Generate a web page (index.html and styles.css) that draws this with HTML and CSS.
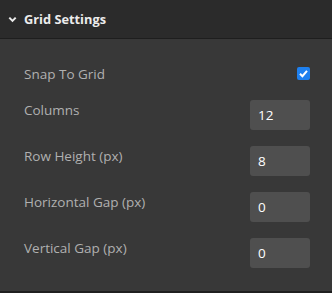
FILE: index.html
```html
<!DOCTYPE html>
<html>
<head>
<meta charset="utf-8">
<link rel="stylesheet" href="styles.css">
</head>
<body>
<div class="panel">
  <div class="panel-header">
    <svg class="chevron" width="9" height="7" viewBox="0 0 9 7"><path d="M1.3 1.6 L4.5 4.9 L7.7 1.6" fill="none" stroke="#ececec" stroke-width="2"/></svg>
    <span class="panel-title">Grid Settings</span>
  </div>
  <div class="panel-body">
    <div class="row row-check">
      <span class="label">Snap To Grid</span>
      <span class="checkbox">
        <svg width="13" height="13" viewBox="0 0 13 13"><path d="M3 6.8 L5.4 9.2 L10 3.8" fill="none" stroke="#fff" stroke-width="2"/></svg>
      </span>
    </div>
    <div class="row">
      <span class="label">Columns</span>
      <div class="input">12</div>
    </div>
    <div class="row">
      <span class="label">Row Height (px)</span>
      <div class="input">8</div>
    </div>
    <div class="row">
      <span class="label">Horizontal Gap (px)</span>
      <div class="input">0</div>
    </div>
    <div class="row">
      <span class="label">Vertical Gap (px)</span>
      <div class="input">0</div>
    </div>
  </div>
</div>
</body>
</html>
```
FILE: styles.css
```css
html, body {
  margin: 0;
  padding: 0;
  background: #383838;
}
.panel {
  width: 332px;
  height: 293px;
  box-sizing: border-box;
  font-family: "Open Sans", "Noto Sans", sans-serif;
  background: #383838;
  border-bottom: 2px solid #1f1f1f;
}
.panel-header {
  height: 38px;
  background: #2b2b2b;
  border-bottom: 1px solid #1e1e1e;
  display: flex;
  align-items: center;
  padding-left: 8px;
}
.chevron {
  display: block;
  margin-right: 7px;
}
.panel-title {
  color: #ececec;
  font-size: 12.8px;
  font-weight: 700;
}
.panel-body {
  padding: 24px 22px 0 24px;
  display: flex;
  flex-direction: column;
  gap: 16px;
}
.row {
  display: flex;
  justify-content: space-between;
  align-items: flex-start;
}
.row-check {
  height: 21px;
  align-items: center;
}
.label {
  color: #b0b0b0;
  font-size: 13.5px;
  line-height: 20px;
}
.checkbox {
  width: 13px;
  height: 13px;
  border-radius: 2px;
  background: #1e80ef;
  display: block;
}
.checkbox svg {
  display: block;
}
.input {
  width: 60px;
  height: 30px;
  box-sizing: border-box;
  background: #4f4f4f;
  border-radius: 3px;
  color: #ffffff;
  font-size: 13.5px;
  line-height: 30px;
  padding-left: 8px;
}
```
